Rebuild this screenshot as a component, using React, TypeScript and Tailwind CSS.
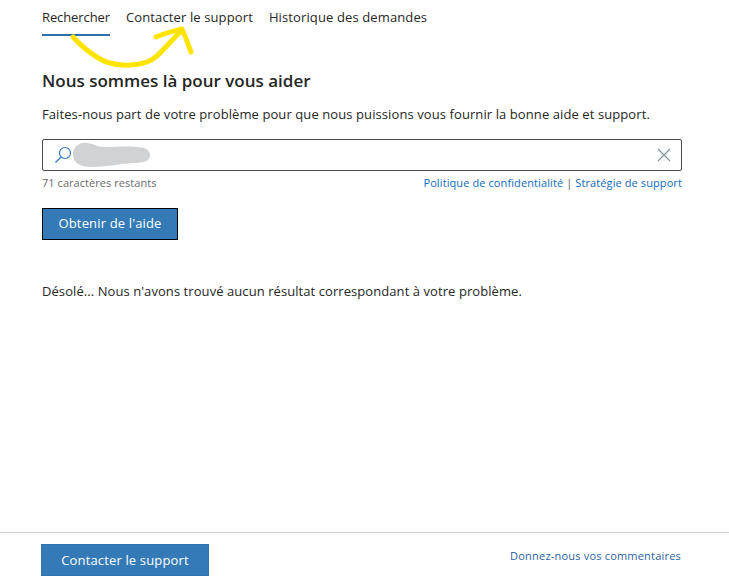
const App = () => {
	return (
		<div className="relative flex h-[584px] w-[729px] flex-col overflow-hidden bg-white font-['Open_Sans',sans-serif] text-[#262626]">
			<div className="flex-1 pl-[42px] pr-[47px]">
				{/* Tabs */}
				<div className="flex h-[36px] gap-4 text-[13px] tracking-[0.12px]">
					<div className="h-[36px] w-[68px] whitespace-nowrap border-b-2 border-[#2f6fad] pt-[8px] tracking-[-0.1px]">Rechercher</div>
					<div className="pt-[8px]">Contacter le support</div>
					<div className="pt-[8px]">Historique des demandes</div>
				</div>

				<h1 className="mt-[33px] text-[17px] font-semibold leading-6">Nous sommes là pour vous aider</h1>
				<p className="mt-[11px] whitespace-nowrap text-[13px] leading-5 tracking-[0.09px]">
					Faites-nous part de votre problème pour que nous puissions vous fournir la bonne aide et support.
				</p>

				{/* Search box */}
				<div className="mt-[15px] flex h-[32px] items-center rounded-[2px] border border-[#4a4a4a] pl-[11px] pr-[10px]">
					<svg width="18" height="18" viewBox="0 0 18 18" fill="none" className="shrink-0">
						<circle cx="11" cy="7" r="5.5" stroke="#2b79c2" strokeWidth="1.2" />
						<path d="M7 11 L1.5 16.5" stroke="#2b79c2" strokeWidth="1.2" />
					</svg>
					<svg width="80" height="26" viewBox="0 0 80 26" className="-ml-[1px] shrink-0">
						<path d="M2 13 C2 5 8 0 16 1 C22 1 26 5 34 5 C44 5 56 4 66 5 C74 5 79 8 79 13 C79 19 74 21 62 21 C48 22 34 25 20 25 C8 25 2 20 2 13 Z" fill="#d1d2d3" />
					</svg>
					<svg width="14" height="14" viewBox="0 0 14 14" fill="none" className="ml-auto shrink-0">
						<path d="M1 1 L13 13 M13 1 L1 13" stroke="#7d8f9c" strokeWidth="1.1" />
					</svg>
				</div>

				<div className="mt-[5px] flex items-center justify-between text-[11px] leading-[14px]">
					<span className="tracking-[0.05px] text-[#6b6b6b]">71 caractères restants</span>
					<span className="tracking-[0.1px] text-[#0f6cbd]">
						Politique de confidentialité <span className="text-[#555555]">|</span> Stratégie de support
					</span>
				</div>

				<button className="mt-[18px] block h-[32px] w-[136px] border border-black bg-[#337ab7] text-[13px] tracking-[0.15px] text-white">
					Obtenir de l'aide
				</button>

				<p className="mt-[41px] whitespace-nowrap text-[13px] leading-5 tracking-[0.07px]">
					Désolé... Nous n'avons trouvé aucun résultat correspondant à votre problème.
				</p>
			</div>

			{/* Footer */}
			<div className="flex h-[52px] items-start justify-between border-t border-[#d2d2d2] pl-[41px] pr-[48px] pt-[11px]">
				<button className="h-[32px] w-[168px] border border-[#2e74ad] bg-[#337ab7] pt-[2px] text-[13px] tracking-[0.15px] text-white">
					Contacter le support
				</button>
				<span className="pt-[3px] text-[11px] leading-[18px] tracking-[0.2px] text-[#2b5fa8]">Donnez-nous vos commentaires</span>
			</div>

			{/* Yellow hand-drawn arrow annotation */}
			<svg width="140" height="50" viewBox="0 0 140 50" fill="none" className="absolute left-[60px] top-[20px]">
				<path
					d="M13 17 C21 26 30 33 40 39 C52 46 72 47 87 42 C98 38 104 28 122 10 M96 17 C105 13 114 11 122 9 C125 15 128 24 131 32"
					stroke="#ffe400"
					strokeWidth="5"
					strokeLinecap="round"
					strokeLinejoin="round"
				/>
			</svg>
		</div>
	);
};

export default App;
